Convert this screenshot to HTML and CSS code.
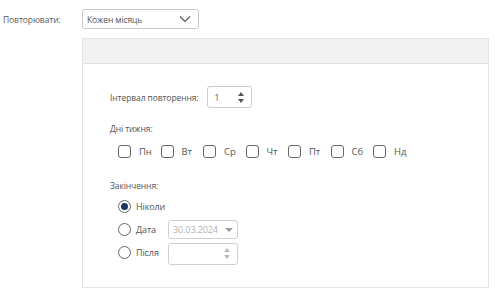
FILE: index.html
```html
<!DOCTYPE html>
<html lang="uk">
<head>
    <meta charset="utf-8">
    <title>Повторення</title>
    <link rel="stylesheet" href="styles.css">
</head>
<body>
    <div class="repeat-row">
        <label class="repeat-label">Повторювати:</label>
        <div class="select">
            <span>Кожен місяць</span>
            <svg class="chevron" width="12" height="8" viewBox="0 0 12 8"><path d="M1 1.5l5 5 5-5" fill="none" stroke="#555" stroke-width="1.1"/></svg>
        </div>
    </div>
    <div class="panel">
        <div class="panel-header"></div>
        <div class="panel-body">
            <div class="interval-row">
                <span class="field-label">Інтервал повторення:</span>
                <div class="spinner">
                    <span>1</span>
                    <div class="arrows">
                        <span class="up"></span>
                        <span class="down"></span>
                    </div>
                </div>
            </div>
            <div class="section-title">Дні тижня:</div>
            <div class="days">
                <label class="day"><span class="checkbox"></span>Пн</label>
                <label class="day"><span class="checkbox"></span>Вт</label>
                <label class="day"><span class="checkbox"></span>Ср</label>
                <label class="day"><span class="checkbox"></span>Чт</label>
                <label class="day"><span class="checkbox"></span>Пт</label>
                <label class="day"><span class="checkbox"></span>Сб</label>
                <label class="day"><span class="checkbox"></span>Нд</label>
            </div>
            <div class="section-title end-title">Закінчення:</div>
            <div class="end-options">
                <div class="option">
                    <span class="radio checked"></span>
                    <span class="option-label">Ніколи</span>
                </div>
                <div class="option">
                    <span class="radio"></span>
                    <span class="option-label">Дата</span>
                    <div class="date-select">
                        <span>30.03.2024</span>
                        <span class="caret"></span>
                    </div>
                </div>
                <div class="option">
                    <span class="radio"></span>
                    <span class="option-label">Після</span>
                    <div class="spinner after">
                        <span></span>
                        <div class="arrows muted">
                            <span class="up"></span>
                            <span class="down"></span>
                        </div>
                    </div>
                </div>
            </div>
        </div>
    </div>
</body>
</html>
```

FILE: styles.css
```css
body {
    margin: 0;
    font-family: 'Open Sans', 'Liberation Sans', sans-serif;
    font-size: 8.5px;
    letter-spacing: -0.1px;
    color: #555;
    background-color: #fff;
}

.repeat-row {
    display: flex;
    align-items: center;
    padding: 9px 0 0 3px;
}

.repeat-label {
    width: 79px;
    color: #5a5a5a;
}

.select {
    width: 117px;
    height: 20px;
    box-sizing: border-box;
    border: 1px solid #c8c8c8;
    border-radius: 3px;
    display: flex;
    align-items: center;
    justify-content: space-between;
    padding: 0 7px 0 4px;
    color: #555;
}

.panel {
    margin: 9px 11px 0 82px;
    border: 1px solid #e4e4e4;
    height: 250px;
    box-sizing: border-box;
}

.panel-header {
    height: 24px;
    background-color: #f2f2f2;
    border-bottom: 1px solid #e0e0e0;
}

.panel-body {
    padding: 22px 0 0 27px;
}

.interval-row {
    display: flex;
    align-items: center;
}

.field-label {
    margin-right: 9px;
}

.spinner {
    width: 45px;
    height: 22px;
    box-sizing: border-box;
    border: 1px solid #ccc;
    border-radius: 3px;
    display: flex;
    align-items: center;
    justify-content: space-between;
    padding: 0 7px 0 6px;
}

.arrows {
    display: flex;
    flex-direction: column;
    gap: 3px;
}

.arrows .up {
    width: 0;
    height: 0;
    border-left: 3.5px solid transparent;
    border-right: 3.5px solid transparent;
    border-bottom: 4px solid #555;
}

.arrows .down {
    width: 0;
    height: 0;
    border-left: 3.5px solid transparent;
    border-right: 3.5px solid transparent;
    border-top: 4px solid #555;
}

.arrows.muted .up {
    border-bottom-color: #b8b8b8;
}

.arrows.muted .down {
    border-top-color: #b8b8b8;
}

.section-title {
    margin-top: 15px;
}

.days {
    display: flex;
    margin: 11px 0 0 8px;
}

.day {
    display: flex;
    align-items: center;
    width: 42.5px;
    font-size: 9.5px;
    color: #555;
}

.checkbox {
    width: 11px;
    height: 11px;
    border: 1px solid #666;
    border-radius: 3px;
    margin-right: 8px;
}

.end-title {
    margin-top: 22px;
}

.end-options {
    margin: 4px 0 0 8px;
    display: flex;
    flex-direction: column;
}

.option {
    display: flex;
    align-items: center;
    height: 23px;
    font-size: 9px;
}

.radio {
    width: 11px;
    height: 11px;
    border: 1px solid #666;
    border-radius: 50%;
    margin-right: 5px;
    position: relative;
}

.radio.checked::after {
    content: "";
    position: absolute;
    left: 2px;
    top: 2px;
    width: 7px;
    height: 7px;
    border-radius: 50%;
    background-color: #1d3461;
}

.option-label {
    width: 32px;
}

.date-select {
    width: 70px;
    height: 19px;
    box-sizing: border-box;
    border: 1px solid #d0d0d0;
    border-radius: 3px;
    display: flex;
    align-items: center;
    justify-content: space-between;
    padding: 0 4px 0 4px;
    color: #b0b0b0;
}

.caret {
    width: 0;
    height: 0;
    border-left: 4px solid transparent;
    border-right: 4px solid transparent;
    border-top: 4px solid #999;
}

.spinner.after {
    width: 70px;
    border-color: #d0d0d0;
    margin-top: 2px;
}
```
